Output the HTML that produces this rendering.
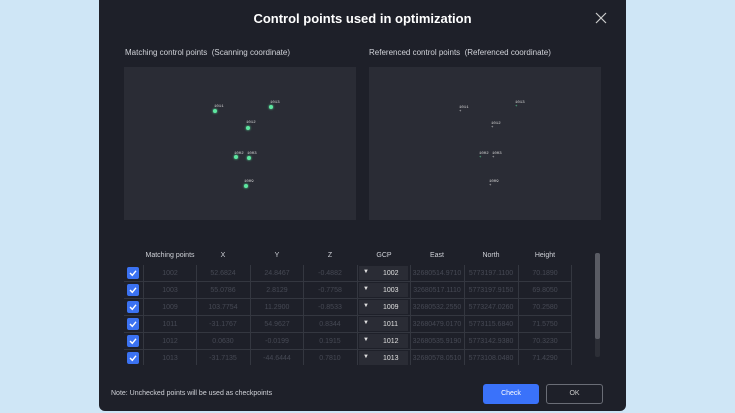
<!DOCTYPE html>
<html><head><meta charset="utf-8"><style>
*{margin:0;padding:0;box-sizing:border-box}
body{width:735px;height:413px;background:#cfe6f6;position:relative;overflow:hidden;font-family:"Liberation Sans",sans-serif}
.modal{position:absolute;left:99px;top:0;width:527px;height:411px;background:#1e2029;border-radius:0 0 6px 6px}
.a{position:absolute}
.t{color:#fff;font-weight:bold;font-size:13px;left:0;width:100%;text-align:center;top:11px}
.lbl{color:#d0d2d8;font-size:8px}
.panel{background:#2a2c35;top:67px;height:153px;width:232px}
.dot{position:absolute;width:4px;height:4px;border-radius:50%;background:#5de8a0;box-shadow:0 0 2px #5de8a0}
.pl{position:absolute;font-size:4px;color:#ddd;font-family:"Liberation Mono",monospace}
.hd{position:absolute;top:252px;font-size:7px;color:#d0d2d8;text-align:center;width:54px}
.vl{position:absolute;top:265px;width:1px;height:100px;background:#343740}
.hl{position:absolute;left:124px;width:448px;height:1px;background:#343740}
.cb{position:absolute;left:127px;width:12px;height:12px;background:#3b72f2;border-radius:2px}
.cb svg{position:absolute;left:2px;top:2px}
.cell{position:absolute;font-size:7px;color:#464954;text-align:center;width:54px}
.g{position:absolute;left:359px;width:49px;height:14px;background:#2a2c35;font-size:7px;color:#e0e0e0}
</style></head><body>
<div class="modal">
<div class="a t">Control points used in optimization</div>
<svg class="a" style="left:496px;top:12px" width="12" height="12"><path d="M1 1L11 11M11 1L1 11" stroke="#ccc" stroke-width="1.2"/></svg>
<div class="a lbl" style="left:26px;top:48px">Matching control points&nbsp; (Scanning coordinate)</div>
<div class="a lbl" style="left:270px;top:48px">Referenced control points&nbsp; (Referenced coordinate)</div>
<div class="a panel" style="left:25px"></div>
<div class="a panel" style="left:270px"></div>
<div class="a lbl" style="left:12px;top:390px;font-size:7px">Note: Unchecked points will be used as checkpoints</div>
<div class="a" style="left:384px;top:384px;width:56px;height:20px;background:#3a72fa;border-radius:3px;color:#fff;font-size:7px;text-align:center;line-height:20px">Check</div>
<div class="a" style="left:447px;top:384px;width:57px;height:20px;border:1px solid #6a6d76;border-radius:3px;color:#ccc;font-size:7px;text-align:center;line-height:18px">OK</div>
<div class="a" style="left:496px;top:253px;width:5px;height:104px;background:#2c2e36;border-radius:2px"></div>
<div class="a" style="left:496px;top:253px;width:5px;height:86px;background:#5a5c64;border-radius:2px"></div>
</div>
<div class="dot" style="left:213px;top:109px"></div><div class="pl" style="left:214px;top:105px">1011</div>
<div class="dot" style="left:269px;top:105px"></div><div class="pl" style="left:270px;top:101px">1013</div>
<div class="dot" style="left:246px;top:126px"></div><div class="pl" style="left:246px;top:121px">1012</div>
<div class="dot" style="left:234px;top:155px"></div><div class="pl" style="left:234px;top:152px">1002</div>
<div class="dot" style="left:247px;top:156px"></div><div class="pl" style="left:247px;top:152px">1003</div>
<div class="dot" style="left:244px;top:184px"></div><div class="pl" style="left:244px;top:180px">1009</div>
<div class="pl" style="left:459px;top:106px">1011<br>+</div>
<div class="pl" style="left:515px;top:101px;">1013<br><span style="color:#5de8a0">+</span></div>
<div class="pl" style="left:491px;top:122px">1012<br>+</div>
<div class="pl" style="left:479px;top:152px">1002<br><span style="color:#5de8a0">+</span></div>
<div class="pl" style="left:492px;top:152px">1003<br>+</div>
<div class="pl" style="left:489px;top:180px">1009<br>+</div>
<div class="hd" style="left:143px">Matching points</div>
<div class="hd" style="left:196px">X</div>
<div class="hd" style="left:250px">Y</div>
<div class="hd" style="left:303px">Z</div>
<div class="hd" style="left:357px">GCP</div>
<div class="hd" style="left:410px">East</div>
<div class="hd" style="left:464px">North</div>
<div class="hd" style="left:518px">Height</div>
<div class="vl" style="left:143px"></div><div class="vl" style="left:196px"></div><div class="vl" style="left:250px"></div><div class="vl" style="left:303px"></div><div class="vl" style="left:357px"></div><div class="vl" style="left:410px"></div><div class="vl" style="left:464px"></div><div class="vl" style="left:518px"></div><div class="vl" style="left:571px"></div>
<div class="hl" style="top:281px"></div><div class="hl" style="top:298px"></div><div class="hl" style="top:315px"></div><div class="hl" style="top:332px"></div><div class="hl" style="top:349px"></div>
<div id="rows"></div>
<script>
var d=[["1002","52.6824","24.8467","-0.4882","32680514.9710","5773197.1100","70.1890"],
["1003","55.0786","2.8129","-0.7758","32680517.1110","5773197.9150","69.8050"],
["1009","103.7754","11.2900","-0.8533","32680532.2550","5773247.0260","70.2580"],
["1011","-31.1767","54.9627","0.8344","32680479.0170","5773115.6840","71.5750"],
["1012","0.0630","-0.0199","0.1915","32680535.9190","5773142.9380","70.3230"],
["1013","-31.7135","-44.6444","0.7810","32680578.0510","5773108.0480","71.4290"]];
var h="",L=[143,196,250,303,410,464,518];
d.forEach(function(r,i){var y=265+i*17;
h+='<div class="cb" style="top:'+(y+2)+'px"><svg width="8" height="8"><path d="M1 4L3.3 6.3L7 1.8" stroke="#fff" stroke-width="1.4" fill="none"/></svg></div>';
r.forEach(function(v,j){h+='<div class="cell" style="left:'+L[j]+'px;top:'+(y+5)+'px">'+v+'</div>';});
h+='<div class="g" style="top:'+(y+1)+'px"><span style="position:absolute;left:4px;top:3px;font-size:6px">&#9660;</span><span style="position:absolute;left:24px;top:4px">'+r[0]+'</span></div>';});
document.getElementById("rows").innerHTML=h;
</script>
</body></html>
